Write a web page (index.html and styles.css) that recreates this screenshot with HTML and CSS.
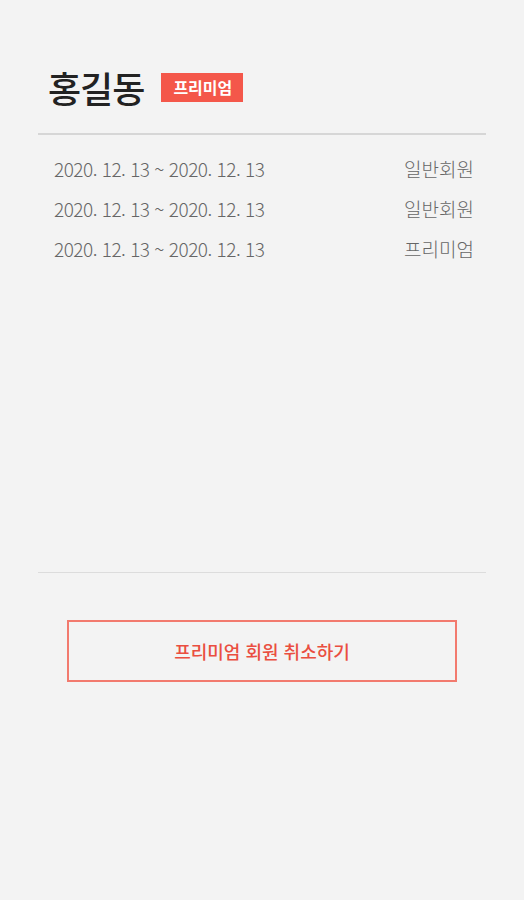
FILE: index.html
```html
<!DOCTYPE html>
<html lang="ko">
<head>
    <meta charset="UTF-8">
    <meta name="viewport" content="width=device-width, initial-scale=1.0">
    <title>회원 정보</title>
    <link rel="stylesheet" href="styles.css">
</head>
<body>
    <div id="app">
        <div class="profile">
            <h1 class="name">홍길동</h1>
            <span class="badge">프리미엄</span>
        </div>

        <ul class="history">
            <li class="row">
                <span class="period">2020. 12. 13 ~ 2020. 12. 13</span>
                <span class="grade">일반회원</span>
            </li>
            <li class="row">
                <span class="period">2020. 12. 13 ~ 2020. 12. 13</span>
                <span class="grade">일반회원</span>
            </li>
            <li class="row">
                <span class="period">2020. 12. 13 ~ 2020. 12. 13</span>
                <span class="grade">프리미엄</span>
            </li>
        </ul>

        <div class="actions">
            <button class="cancel">프리미엄 회원 취소하기</button>
        </div>
    </div>
</body>
</html>
```

FILE: styles.css
```css
body {
    margin: 0;
    background-color: #f3f3f3;
    font-family: "Noto Sans CJK KR", "Noto Sans", sans-serif;
    color: #333;
}

#app {
    margin: 0 38px;
}

.profile {
    display: flex;
    align-items: center;
    height: 135px;
    padding: 41px 0 0 10px;
    border-bottom: 2px solid #d6d6d6;
    box-sizing: border-box;
}

.name {
    margin: 0;
    font-size: 36px;
    font-weight: 500;
    color: #222;
    letter-spacing: -1px;
}

.badge {
    margin-left: 17px;
    background-color: #f4574a;
    color: #fff;
    font-size: 16px;
    font-weight: 700;
    line-height: 29px;
    padding: 0 11px 0 12px;
}

.history {
    list-style: none;
    margin: 0;
    padding: 14px 0 0;
    height: 438px;
    box-sizing: border-box;
    border-bottom: 1px solid #dcdcdc;
}

.row {
    display: flex;
    justify-content: space-between;
    height: 40px;
    line-height: 40px;
    padding: 0 12px 0 16px;
    font-size: 19px;
    font-weight: 300;
    color: #666;
}

.period {
    letter-spacing: -0.5px;
}

.actions {
    display: flex;
    justify-content: center;
    padding-top: 47px;
}

.cancel {
    width: 390px;
    height: 62px;
    background: transparent;
    border: 2px solid #f27a6e;
    color: #ea4e40;
    font-family: inherit;
    font-size: 18px;
    font-weight: 500;
    cursor: pointer;
}
```
